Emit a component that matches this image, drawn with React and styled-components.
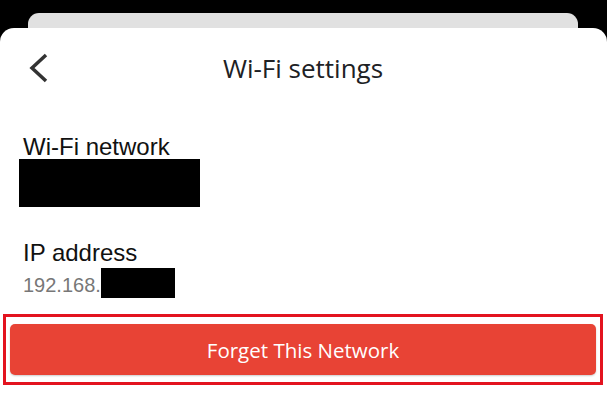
import React from 'react';
import styled, { createGlobalStyle } from 'styled-components';

// ============ CSS ============== //
const GlobalStyle = createGlobalStyle`
  html, body {
    margin: 0;
    padding: 0;
    background: #000;
  }
  body {
    font-family: "Liberation Sans", Arial, sans-serif;
  }
`;

const Screen = styled.div`
  width: 607px;
  height: 417px;
  background: #000;
  display: flex;
  flex-direction: column;
  padding-top: 13px;
  box-sizing: border-box;
  overflow: hidden;
`;

const PeekCard = styled.div`
  height: 15px;
  margin: 0 29px 0 28px;
  background: #e1e1e1;
  border-radius: 11px 11px 0 0;
  flex-shrink: 0;
`;

const Sheet = styled.div`
  flex: 1;
  background: #fff;
  border-radius: 14px 14px 0 0;
  display: flex;
  flex-direction: column;
  padding: 0 4px 0 3px;
`;

const Header = styled.div`
  height: 80px;
  display: grid;
  grid-template-columns: 1fr auto 1fr;
  align-items: center;
`;

const BackBtn = styled.button`
  justify-self: start;
  background: none;
  border: 0;
  padding: 0 0 0 26px;
  display: flex;
  align-items: center;
  cursor: pointer;
`;

const Title = styled.h1`
  margin: 0;
  font-family: "Open Sans", Roboto, sans-serif;
  font-weight: 400;
  font-size: 26px;
  color: #202124;
  letter-spacing: 0;
`;

const Field = styled.div`
  display: flex;
  flex-direction: column;
  align-items: flex-start;
  padding-left: ${props => props.padL || 0}px;
  margin-top: ${props => props.mt}px;
`;

const Label = styled.div`
  font-size: 24px;
  line-height: 24px;
  color: #111;
  padding-left: ${props => props.indent || 0}px;
`;

const Redacted = styled.div`
  width: ${props => props.w}px;
  height: ${props => props.h}px;
  background: #000;
  margin-top: ${props => props.mt || 0}px;
`;

const ValueRow = styled.div`
  display: flex;
  align-items: flex-start;
  margin-top: 3px;
`;

const Value = styled.span`
  font-size: 20px;
  line-height: 30px;
  padding-top: 2px;
  color: #777;
`;

const Highlight = styled.div`
  margin-top: 14px;
  border: 3px solid #e3131f;
  padding: 7px 4px 7px 4px;
`;

const ForgetBtn = styled.button`
  width: 100%;
  height: 51px;
  background: #e84335;
  border: 0;
  border-radius: 5px;
  box-shadow: 0 1px 2px rgba(0, 0, 0, 0.2);
  color: #fff;
  font-family: "Open Sans", Roboto, sans-serif;
  font-size: 20.5px;
  font-weight: 500;
  letter-spacing: 0;
  cursor: pointer;
`;

// ============ Function ============== //
const App = () => {
  return (
    <Screen>
      <GlobalStyle />
      <PeekCard />
      <Sheet>
        <Header>
          <BackBtn aria-label="Back">
            <svg width="20" height="30" viewBox="0 0 20 30">
              <polyline
                points="17,2 3,15 17,28"
                fill="none"
                stroke="#333"
                strokeWidth="3.5"
              />
            </svg>
          </BackBtn>
          <Title>Wi-Fi settings</Title>
          <div />
        </Header>

        <Field padL={16} mt={27}>
          <Label indent={4}>Wi-Fi network</Label>
          <Redacted w={181} h={48} />
        </Field>

        <Field padL={20} mt={34}>
          <Label>IP address</Label>
          <ValueRow>
            <Value>192.168.</Value>
            <Redacted w={74} h={30} />
          </ValueRow>
        </Field>

        <Highlight>
          <ForgetBtn>Forget This Network</ForgetBtn>
        </Highlight>
      </Sheet>
    </Screen>
  );
};

export default App;
